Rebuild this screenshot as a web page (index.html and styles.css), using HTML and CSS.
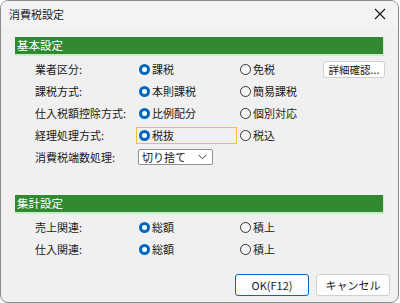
FILE: index.html
```html
<!DOCTYPE html>
<html lang="ja">
<head>
    <meta charset="UTF-8">
    <title>消費税設定</title>
    <link rel="stylesheet" href="styles.css">
</head>
<body>
  <div class="dialog">
    <div class="titlebar">
      <span class="title">消費税設定</span>
      <span class="close">
        <svg width="12" height="12" viewBox="0 0 12 12"><path d="M1 1 L11 11 M11 1 L1 11" stroke="#1a1a1a" stroke-width="1.2" fill="none"/></svg>
      </span>
    </div>

    <div class="head head1">基本設定</div>
    <div class="rows">
      <div class="label">業者区分:</div>
      <div class="opt"><span class="radio on"></span>課税</div>
      <div class="opt"><span class="radio"></span>免税</div>
      <div class="cell"><button class="small">詳細確認...</button></div>

      <div class="label">課税方式:</div>
      <div class="opt"><span class="radio on"></span>本則課税</div>
      <div class="opt"><span class="radio"></span>簡易課税</div>
      <div class="cell"></div>

      <div class="label">仕入税額控除方式:</div>
      <div class="opt"><span class="radio on"></span>比例配分</div>
      <div class="opt"><span class="radio"></span>個別対応</div>
      <div class="cell"></div>

      <div class="label">経理処理方式:</div>
      <div class="opt"><span class="focus"><span class="radio on"></span>税抜</span></div>
      <div class="opt"><span class="radio"></span>税込</div>
      <div class="cell"></div>

      <div class="label">消費税端数処理:</div>
      <div class="opt">
        <div class="select">
          <span>切り捨て</span>
          <svg width="9" height="6" viewBox="0 0 9 6"><path d="M0.5 0.8 L4.5 4.8 L8.5 0.8" stroke="#333" stroke-width="1" fill="none"/></svg>
        </div>
      </div>
      <div class="cell"></div>
      <div class="cell"></div>
    </div>

    <div class="head head2">集計設定</div>
    <div class="rows">
      <div class="label">売上関連:</div>
      <div class="opt"><span class="radio on"></span>総額</div>
      <div class="opt"><span class="radio"></span>積上</div>
      <div class="cell"></div>

      <div class="label">仕入関連:</div>
      <div class="opt"><span class="radio on"></span>総額</div>
      <div class="opt"><span class="radio"></span>積上</div>
      <div class="cell"></div>
    </div>

    <div class="footer">
      <button class="big default">OK(F12)</button>
      <button class="big">キャンセル</button>
    </div>
  </div>
</body>
</html>
```

FILE: styles.css
```css
*{
  margin: 0;
  padding: 0;
  box-sizing: border-box;
}

body{
  width: 400px;
  height: 303px;
  overflow: hidden;
  font-family: "Noto Sans CJK JP", "Noto Sans", sans-serif;
  font-size: 11px;
  color: #1a1a1a;
}

.dialog{
  width: 399px;
  height: 303px;
  background-color: #f0f0f0;
  border: 1px solid #8c8c8c;
  border-radius: 8px;
  overflow: hidden;
}

.titlebar{
  height: 26px;
  display: flex;
  align-items: center;
  justify-content: space-between;
  padding-left: 8px;
  background-color: #f3f3f3;
}

.close{
  width: 20px;
  display: flex;
  align-items: center;
  margin-right: 4px;
}

.head{
  height: 19px;
  margin-left: 14px;
  margin-right: 14px;
  padding-left: 2px;
  line-height: 17px;
  font-size: 11.5px;
  color: white;
  background-color: #318a32;
  border-right: 1px solid #c6efc6;
  border-bottom: 2px solid #c6efc6;
}

.head1{
  margin-top: 10px;
}

.head2{
  margin-top: 27px;
}

.rows{
  display: grid;
  grid-template-columns: 103px 101px 84px 62px;
  grid-auto-rows: 22px;
  padding-left: 34px;
  margin-top: 2px;
}

.label,
.opt,
.cell{
  display: flex;
  align-items: center;
  min-width: 0;
}

.radio{
  flex: none;
  width: 11px;
  height: 11px;
  border-radius: 50%;
  border: 1px solid #333;
  background-color: #f6f6f6;
  margin-left: 1px;
  margin-right: 2px;
}

.radio.on{
  border: 3px solid #0067c0;
  background-color: white;
}

.focus{
  display: flex;
  align-items: center;
  flex: none;
  width: 101px;
  height: 17px;
  margin-left: -2px;
  padding-left: 1px;
  border: 1px solid #f3bf3d;
}

.select{
  display: flex;
  align-items: center;
  justify-content: space-between;
  flex: none;
  width: 75px;
  height: 16px;
  padding-left: 3px;
  padding-right: 5px;
  background-color: white;
  border: 1px solid #8f8f8f;
  border-radius: 2px;
}

button{
  font-family: "Noto Sans CJK JP", "Noto Sans", sans-serif;
  color: #1a1a1a;
  background-color: #fdfdfd;
  border: 1px solid #d0d0d0;
  border-radius: 3px;
}

.small{
  width: 62px;
  height: 17px;
  font-size: 10.5px;
  line-height: 15px;
}

.footer{
  display: flex;
  justify-content: flex-end;
  gap: 7px;
  padding-right: 8px;
  margin-top: 14px;
}

.big{
  width: 74px;
  height: 22px;
  font-size: 11px;
}

.big.default{
  border: 1px solid #0067c0;
}
```
